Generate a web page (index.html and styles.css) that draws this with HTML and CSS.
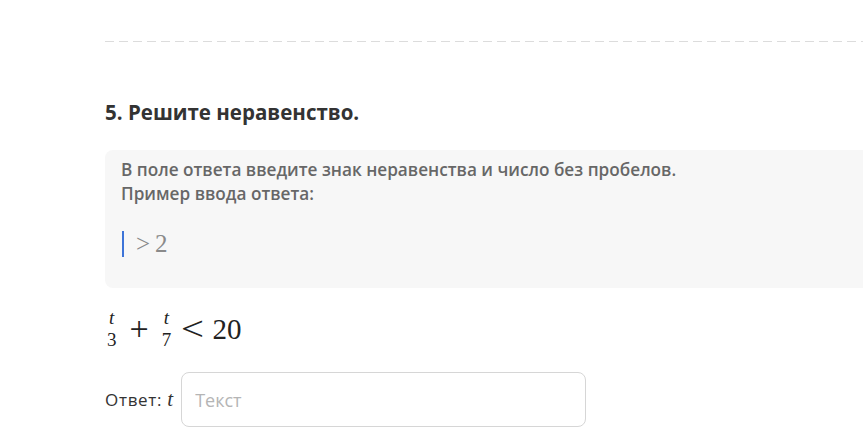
FILE: index.html
```html
<!DOCTYPE html>
<html lang="ru">
<head>
<meta charset="utf-8">
<link rel="stylesheet" href="styles.css">
</head>
<body>
<div class="page">
  <div class="divider"></div>
  <section class="task">
    <h2 class="task-title">5. Решите неравенство.</h2>
    <div class="hint">
      <p class="hint-text">В поле ответа введите знак неравенства и число без пробелов.<br>Пример ввода ответа:</p>
      <div class="hint-example"><span class="cursor"></span><span class="math-sample">&gt;&#8201;2</span></div>
    </div>
    <div class="formula">
      <span class="frac"><span class="num">t</span><span class="den">3</span></span>
      <span class="op">+</span>
      <span class="frac"><span class="num">t</span><span class="den">7</span></span>
      <span class="op op-lt">&lt;</span>
      <span class="rhs">20</span>
    </div>
    <div class="answer">
      <label class="answer-label">Ответ: <span class="var">t</span></label>
      <input class="answer-input" type="text" placeholder="Текст">
    </div>
  </section>
</div>
</body>
</html>
```

FILE: styles.css
```css
html, body {
  margin: 0;
  padding: 0;
  background: #ffffff;
  overflow: hidden;
}
.page {
  width: 863px;
  height: 448px;
  padding-left: 105px;
  box-sizing: border-box;
  font-family: "Open Sans", "Noto Sans", sans-serif;
  color: #333333;
  overflow: hidden;
}
.divider {
  margin-top: 41px;
  height: 1px;
  margin-right: -20px;
  background-image: linear-gradient(to right, #dcdcdc 0, #dcdcdc 9px, transparent 9px);
  background-size: 14px 1px;
  background-repeat: repeat-x;
}
.task-title {
  margin: 56px 0 0 0;
  font-size: 20.5px;
  line-height: 28px;
  font-weight: 700;
  color: #333333;
}
.hint {
  margin-top: 24px;
  margin-right: -40px;
  background: #f7f7f7;
  border-radius: 8px;
  padding: 8px 16px 0 16px;
  height: 138px;
  box-sizing: border-box;
}
.hint-text {
  margin: 0;
  font-size: 17.2px;
  line-height: 24px;
  font-weight: 600;
  color: #676767;
}
.hint-example {
  margin-top: 25px;
  display: flex;
  align-items: center;
  height: 26px;
}
.cursor {
  width: 2px;
  height: 26px;
  background: #3d74d8;
  margin-left: 1px;
}
.math-sample {
  margin-left: 12px;
  font-family: "Liberation Serif", "DejaVu Serif", serif;
  font-size: 25px;
  color: #8a8a8a;
}
.formula {
  margin-top: 21px;
  display: flex;
  align-items: center;
  font-family: "Liberation Serif", "DejaVu Serif", serif;
  color: #222222;
  height: 40px;
}
.frac {
  display: inline-flex;
  flex-direction: column;
  align-items: center;
  font-size: 19px;
  line-height: 16px;
  margin: 0 2px;
}
.num {
  font-style: italic;
}
.den {
  margin-top: 6px;
}
.op {
  font-size: 34px;
  margin: 0 11px;
  line-height: 1;
  font-weight: 300;
}
.op-lt {
  transform: scaleX(1.2);
  margin: 0 10px 0 10px;
}
.rhs {
  font-size: 29px;
  line-height: 1;
}
.answer {
  margin-top: 23px;
  display: flex;
  align-items: center;
}
.answer-label {
  font-size: 17px;
  color: #333333;
  font-weight: 500;
  letter-spacing: 0.7px;
  margin-right: 8px;
}
.var {
  font-family: "Liberation Serif", "DejaVu Serif", serif;
  font-style: italic;
  font-size: 21px;
  letter-spacing: 0;
}
.answer-input {
  width: 405px;
  height: 55px;
  box-sizing: border-box;
  border: 1px solid #d6d6d6;
  border-radius: 8px;
  padding: 0 13px;
  font-family: "Open Sans", "Noto Sans", sans-serif;
  font-size: 18px;
  color: #333333;
  background: #ffffff;
  outline: none;
}
.answer-input::placeholder {
  color: #b5b5b5;
}
```
